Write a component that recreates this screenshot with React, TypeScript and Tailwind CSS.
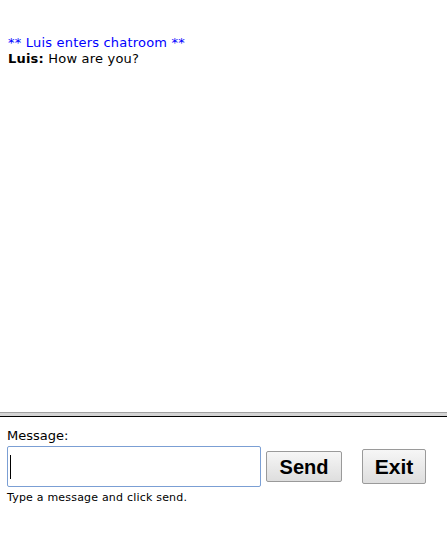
export default function App() {
  return (
    <div className="w-[447px] h-[554px] bg-white flex flex-col font-['DejaVu_Sans',sans-serif]">
      {/* chat log */}
      <div className="h-[412px] pt-[35px] px-[8px] text-[13px] leading-[16px] tracking-[0.2px]">
        <div className="text-[#0000ff]">** Luis enters chatroom **</div>
        <div className="text-black">
          <span className="font-bold">Luis:</span> How are you?
        </div>
      </div>

      {/* divider */}
      <div className="h-[5px] border-t border-t-[#a0a0a0] border-b border-b-black bg-[#d4d4d4]" />

      {/* input area */}
      <div className="px-[7px] pt-[12px]">
        <div className="text-[13px] leading-[14px] text-black">Message:</div>
        <div className="flex items-center mt-[3px] h-[41px]">
          <div className="w-[254px] h-[41px] border border-[#7b9fd4] rounded-[2px] flex items-center pl-[2px]">
            <div className="w-px h-[24px] bg-black" />
          </div>
          <button className="ml-[5px] w-[76px] h-[31px] border border-[#9a9a9a] rounded-[2px] bg-gradient-to-b from-[#f6f6f6] to-[#dedede] font-['Liberation_Sans',sans-serif] font-bold text-[20px] text-black flex items-center justify-center">
            Send
          </button>
          <button className="ml-[20px] w-[64px] h-[35px] border border-[#9a9a9a] rounded-[2px] bg-gradient-to-b from-[#f6f6f6] to-[#dedede] font-['Liberation_Sans',sans-serif] font-bold text-[21px] text-black flex items-center justify-center">
            Exit
          </button>
        </div>
        <div className="mt-[5px] text-[11px] leading-[12px] tracking-[0.2px] text-black">Type a message and click send.</div>
      </div>
    </div>
  );
}
